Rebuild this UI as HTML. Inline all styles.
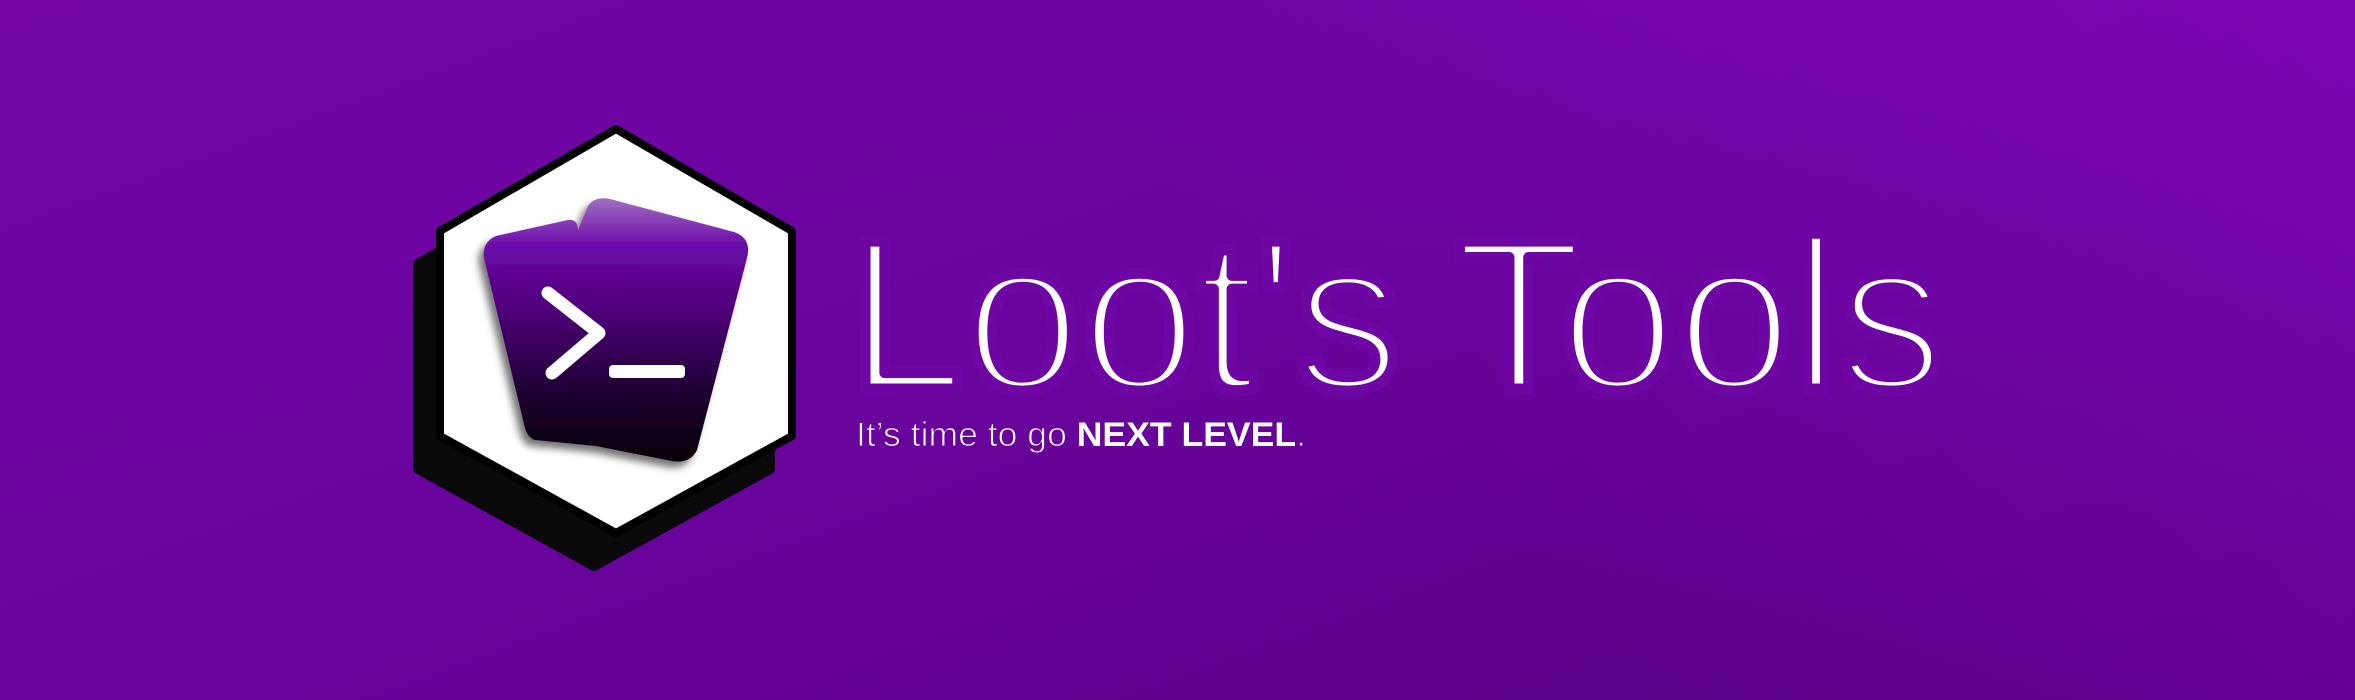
<!DOCTYPE html>
<html><head><meta charset="utf-8"><style>
html,body{margin:0;padding:0;width:2355px;height:700px;overflow:hidden}
body{background:linear-gradient(160deg,#7406a8 0%,#6a049e 45%,#560082 100%);position:relative}
.bg2{position:absolute;inset:0;background:linear-gradient(225deg,rgba(140,10,200,0.55) 0%,rgba(140,10,200,0) 45%)}
svg{position:absolute;left:0;top:0}
</style></head><body><div class="bg2"></div>
<svg width="2355" height="700" viewBox="0 0 2355 700">
<defs>
<linearGradient id="cg" x1="0" y1="0" x2="0" y2="1" gradientUnits="objectBoundingBox">
<stop offset="0" stop-color="#a070c4"/><stop offset="0.18" stop-color="#6a0aa8"/><stop offset="0.4" stop-color="#52007e"/><stop offset="0.75" stop-color="#1c0630"/><stop offset="1" stop-color="#060008"/>
</linearGradient>
<filter id="sh" x="-20%" y="-20%" width="140%" height="140%"><feDropShadow dx="-5" dy="6" stdDeviation="4" flood-color="#000" flood-opacity="0.55"/></filter>
</defs>
<polygon points="594,162 770,264 770,469 594,566 418,469 418,264" fill="#0a0a0a" stroke="#0a0a0a" stroke-width="10" stroke-linejoin="round"/>
<polygon points="616,129 792,231 792,436 616,533 440,436 440,231" fill="#fff" stroke="#000" stroke-width="8" stroke-linejoin="round"/>
<g filter="url(#sh)">
<path d="M496,236 L568,220 Q578,219 578,230 L588,206 Q595,196 610,199 L734,232 Q752,238 747,258 L697,450 Q690,464 672,461 L596,446 L535,440 Q528,438 525,428 L484,258 Q482,242 496,236 Z" fill="url(#cg)"/>
</g>
<path d="M548,293 L599,333 L552,373" fill="none" stroke="#fff" stroke-width="13" stroke-linecap="round" stroke-linejoin="round"/>
<rect x="609" y="365" width="76" height="13" rx="4" fill="#fff"/>
<text x="848" y="389" font-family="Liberation Sans, sans-serif" font-size="215" textLength="1096" lengthAdjust="spacingAndGlyphs" fill="#fff" stroke="#6e06a4" stroke-width="11" stroke-linejoin="round">Loot's Tools</text>
<text x="856" y="446" font-family="Liberation Sans, sans-serif" font-size="34" textLength="450" lengthAdjust="spacingAndGlyphs" fill="#fff" stroke="#6a05a0" stroke-width="1">It’s time to go <tspan font-weight="bold" stroke-width="0">NEXT LEVEL</tspan>.</text>
</svg>
</body></html>
